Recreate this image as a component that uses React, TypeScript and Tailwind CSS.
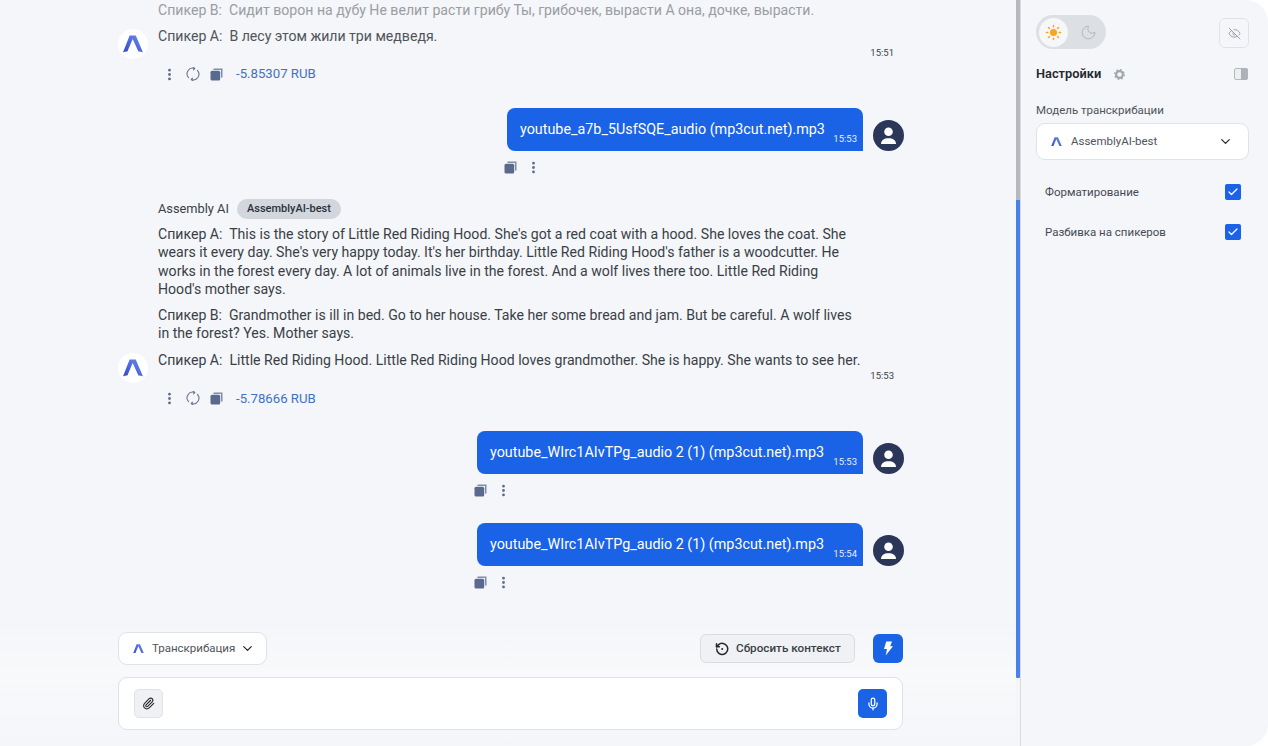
import { ChevronDown, EllipsisVertical, EyeOff, Mic, Moon, Paperclip, Sun, Check } from "lucide-react";

function Logo({ size = 20 }: { size?: number }) {
  return (
    <svg width={size} height={size * 0.9} viewBox="0 0 20 18">
      <defs>
        <linearGradient id="lg" x1="0" y1="1" x2="1" y2="0">
          <stop offset="0" stopColor="#2f48c8" />
          <stop offset="1" stopColor="#6f8cf0" />
        </linearGradient>
      </defs>
      <path d="M6.6 0.5h6.2L20 17.5c-1.6-.8-3.2-1-4.6-1.1L9.7 4 4.4 16.4c-1.4.1-2.9.3-4.4 1.1z" fill="url(#lg)" />
    </svg>
  );
}

function CopyIcon() {
  return (
    <svg width="13" height="13" viewBox="0 0 13 13" className="text-[#5a6a8e]">
      <path d="M3.5 0.5h9v9h-1.5v-7.500h-7.500z" fill="currentColor" opacity="0.75" />
      <rect x="0.5" y="2.800" width="9.700" height="9.700" rx="1.500" fill="currentColor" />
    </svg>
  );
}

function RegenIcon() {
  return (
    <svg width="14" height="14" viewBox="0 0 14 14" fill="none" stroke="#6b7690" strokeWidth="1.100" strokeLinecap="round" strokeLinejoin="round">
      <path d="M8.500 1.400A5.700 5.700 0 0 0 2.600 10.700" />
      <path d="M5.500 12.600A5.700 5.700 0 0 0 11.400 3.300" />
      <path d="M7.300 0.400 8.800 1.500 7.500 2.800" />
      <path d="M6.700 13.600 5.200 12.500 6.500 11.200" />
    </svg>
  );
}

function Avatar() {
  return (
    <div className="w-[31px] h-[31px] shrink-0 rounded-full bg-[#2b3658] flex items-center justify-center overflow-hidden">
      <svg width="19" height="19" viewBox="0 0 19 19" fill="#fff">
        <circle cx="9.500" cy="5.800" r="4.300" />
        <path d="M2 18c0-4 3.200-5.800 7.500-5.800S17 14 17 18z" />
      </svg>
    </div>
  );
}

function BotRow({ text, className }: { text: string; className: string }) {
  return (
    <div className={`flex items-start gap-[10px] ${className}`}>
      <div className="w-[30px] h-[30px] shrink-0 rounded-full bg-white flex items-center justify-center">
        <Logo />
      </div>
      <p className="-mt-[3px] text-[14.100px] leading-[20px] whitespace-nowrap">{text}</p>
    </div>
  );
}

function BotActions({ cost, className }: { cost: string; className: string }) {
  return (
    <div className={`flex items-center h-5 pl-[44px] ${className}`}>
      <EllipsisVertical size={15} strokeWidth={2.500} className="text-[#5a6a8e]" />
      <div className="ml-[9px] flex"><RegenIcon /></div>
      <div className="ml-[10px] flex"><CopyIcon /></div>
      <span className="ml-[13px] text-[13.200px] text-[#3f72c4]">{cost}</span>
    </div>
  );
}

function UserMsg({ name, time, width, actions, className }: { name: string; time: string; width: string; actions: string; className: string }) {
  return (
    <div className={className}>
      <div className="flex justify-end items-end gap-[10px]">
        <div className={`h-[43px] ${width} bg-[#1a62e6] rounded-t-[8px] rounded-bl-[8px] pl-[13px] pr-[6px] flex justify-between text-white`}>
          <span className="text-[14.350px] leading-[43px] whitespace-nowrap">{name}</span>
          <span className="text-[9.500px] self-end pb-[6px] leading-[12px] opacity-90">{time}</span>
        </div>
        <Avatar />
      </div>
      <div className={`flex justify-end mt-[6px] ${actions}`}>
        <div className="flex items-center h-5">
          <CopyIcon />
          <EllipsisVertical size={15} strokeWidth={2.500} className="text-[#5a6a8e] ml-[9px]" />
        </div>
      </div>
    </div>
  );
}

function Chk({ label }: { label: string }) {
  return (
    <div className="flex items-center justify-between pl-[9px] pr-2 h-4">
      <span className="pt-px text-[11.500px] text-[#444a55]">{label}</span>
      <span className="w-4 h-4 rounded-[2px] bg-[#1a62e6] flex items-center justify-center">
        <Check size={12} strokeWidth={2.500} className="text-white" />
      </span>
    </div>
  );
}

export default function App() {
  return (
    <div className="w-[1268px] h-[746px] flex bg-[#f4f6f9] rounded-r-[22px] overflow-hidden text-[#3a3f47] [font-family:Roboto,'Liberation_Sans',sans-serif]">
      <div className="w-[1016px] h-full flex flex-col">
        <div className="flex-1 min-h-0 overflow-hidden pl-[118px] pr-[112px]">
          <p className="pl-10 text-[14.100px] leading-[20px] text-[#9a9da3]">Спикер B:&nbsp; Сидит ворон на дубу Не велит расти грибу Ты, грибочек, вырасти А она, дочке, вырасти.</p>
          <BotRow className="mt-[9px] text-[#50545b]" text={"Спикер A:\u00a0 В лесу этом жили три медведя."} />
          <div className="flex justify-end pr-[10px] text-[9.500px] leading-[12px] -mt-[12px]">15:51</div>
          <BotActions className="mt-[5px]" cost="-5.85307 RUB" />

          <UserMsg className="mt-[24px]" width="w-[356px]" actions="pr-[363px]" name="youtube_a7b_5UsfSQE_audio (mp3cut.net).mp3" time="15:53" />

          <div className="mt-[22px] pl-10 h-5 flex items-center gap-2">
            <span className="text-[12.800px]">Assembly AI</span>
            <span className="h-5 px-[10px] rounded-full bg-[#d2d6dd] text-[11px] font-medium leading-5 text-[#2c3038]">AssemblyAI-best</span>
          </div>
          <div className="pl-10 pr-[2px] mt-[6px] w-[742px] text-[14.100px] leading-[18.400px]">
            <p>Спикер A:&nbsp; This is the story of Little Red Riding Hood. She's got a red coat with a hood. She loves the coat. She wears it every day. She's very happy today. It's her birthday. Little Red Riding Hood's father is a woodcutter. He works in the forest every day. A lot of animals live in the forest. And a wolf lives there too. Little Red Riding Hood's mother says.</p>
            <p className="mt-[7px]">Спикер B:&nbsp; Grandmother is ill in bed. Go to her house. Take her some bread and jam. But be careful. A wolf lives in the forest? Yes. Mother says.</p>
          </div>
          <BotRow className="mt-[11px]" text={"Спикер A:\u00a0 Little Red Riding Hood. Little Red Riding Hood loves grandmother. She is happy. She wants to see her."} />
          <div className="flex justify-end pr-[10px] text-[9.500px] leading-[12px] -mt-[13px]">15:53</div>
          <BotActions className="mt-[6px]" cost="-5.78666 RUB" />

          <UserMsg className="mt-[23px]" width="w-[386px]" actions="pr-[393px]" name="youtube_WIrc1AIvTPg_audio 2 (1) (mp3cut.net).mp3" time="15:53" />
          <UserMsg className="mt-[23px]" width="w-[386px]" actions="pr-[393px]" name="youtube_WIrc1AIvTPg_audio 2 (1) (mp3cut.net).mp3" time="15:54" />
        </div>

        <div className="pl-[118px] pr-[113px] pt-[10px] -mt-[10px] pb-[16px] bg-[linear-gradient(#f4f6f9,#f8f9fb_40%,#f4f6f9)]">
          <div className="flex items-center">
            <div className="w-[149px] h-[33px] bg-white rounded-[9px] border border-[#dfe2e7] flex items-center pl-[14px]">
              <Logo size={11} />
              <span className="ml-[8px] pt-px text-[11.500px] text-[#50545b]">Транскрибация</span>
              <ChevronDown size={15} strokeWidth={2} className="ml-auto mr-[11px] text-[#25282e]" />
            </div>
            <div className="ml-auto w-[155px] h-[29px] bg-[#f0f1f4] rounded-[6px] border border-[#d9dce1] flex items-center pl-[14px]">
              <svg width="14" height="14" viewBox="0 0 14 14" fill="none" stroke="#25282e" strokeWidth="1.500" strokeLinecap="round" strokeLinejoin="round">
                <path d="M1.700 7A5.500 5.500 0 1 0 3.400 2.900L1.500 4.700" />
                <path d="M1.500 1.800v2.900h2.900" />
                <circle cx="7.200" cy="7" r="1" fill="#25282e" stroke="none" />
              </svg>
              <span className="ml-[7px] pt-px text-[11.700px] font-medium">Сбросить контекст</span>
            </div>
            <div className="ml-[18px] w-[30px] h-[29px] rounded-[6px] bg-[#1a62e6] flex items-center justify-center">
              <svg width="10" height="15" viewBox="0 0 10 15" fill="#fff">
                <path d="M3.200 0.500H9L7.200 5.300H10L2.700 14.500 4 7.900H1z" />
              </svg>
            </div>
          </div>
          <div className="mt-[12px] h-[53px] bg-white rounded-[9px] border border-[#dfe2e7] flex items-center justify-between pl-[15px] pr-[15px]">
            <div className="w-[29px] h-[29px] rounded-[5px] bg-[#f0f1f4] border border-[#dfe2e7] flex items-center justify-center">
              <Paperclip size={13} strokeWidth={2} className="text-[#25282e]" />
            </div>
            <div className="w-[29px] h-[29px] rounded-[5px] bg-[#1a62e6] flex items-center justify-center">
              <Mic size={14} strokeWidth={2.200} className="text-white" />
            </div>
          </div>
        </div>
      </div>

      <div className="w-1 h-full flex flex-col">
        <div className="h-[200px] bg-[#b5b9bf]" />
        <div className="h-[478px] bg-[#4a80ea] rounded-b-[1px]" />
      </div>
      <div className="w-px h-full bg-[#d9dbdf]" />

      <div className="w-[247px] h-full pl-[15px] pr-[19px] pt-[15px]">
        <div className="flex items-start justify-between">
          <div className="w-[70px] h-[34px] rounded-full bg-[#dcdfe3] p-[2px] flex items-center">
            <div className="w-[29px] h-[29px] ml-[1px] rounded-full bg-[#f6f7f9] flex items-center justify-center">
              <Sun size={17} fill="#f5a623" strokeWidth={2} className="text-[#f5a623]" />
            </div>
            <Moon size={17} strokeWidth={1.200} className="ml-[12px] text-[#aeb2b8]" />
          </div>
          <div className="w-[30px] h-[30px] mt-[3px] rounded-[6px] border border-[#dfe2e7] flex items-center justify-center">
            <EyeOff size={13} strokeWidth={1.500} className="text-[#8b8f96]" />
          </div>
        </div>
        <div className="flex items-center mt-[15px] h-5">
          <span className="text-[12.800px] font-semibold text-[#25282e]">Настройки</span>
          <svg width="11" height="11" viewBox="0 0 12 12" className="ml-[13px]">
            <circle cx="6" cy="6" r="3.700" fill="none" stroke="#a2a7ae" strokeWidth="2.400" />
            <circle cx="6" cy="6" r="5.300" fill="none" stroke="#a2a7ae" strokeWidth="1.300" strokeDasharray="2 2.160" />
          </svg>
          <svg width="14" height="12" viewBox="0 0 14 12" className="ml-auto mr-px">
            <rect x="0.500" y="0.500" width="13" height="11" rx="1.500" fill="#eceef1" stroke="#b5b9bf" />
            <rect x="7" y="0.500" width="6.500" height="11" fill="#aeb2b8" />
          </svg>
        </div>
        <p className="mt-[19px] text-[11.500px] leading-[14px] text-[#50545b]">Модель транскрибации</p>
        <div className="mt-[6px] h-[37px] bg-white rounded-[9px] border border-[#dfe2e7] flex items-center pl-[14px] pr-[15px]">
          <Logo size={11} />
          <span className="ml-[9px] pt-px text-[11.500px] text-[#50545b]">AssemblyAI-best</span>
          <ChevronDown size={15} strokeWidth={2} className="ml-auto text-[#25282e]" />
        </div>
        <div className="mt-[24px] flex flex-col gap-6">
          <Chk label="Форматирование" />
          <Chk label="Разбивка на спикеров" />
        </div>
      </div>
    </div>
  );
}
